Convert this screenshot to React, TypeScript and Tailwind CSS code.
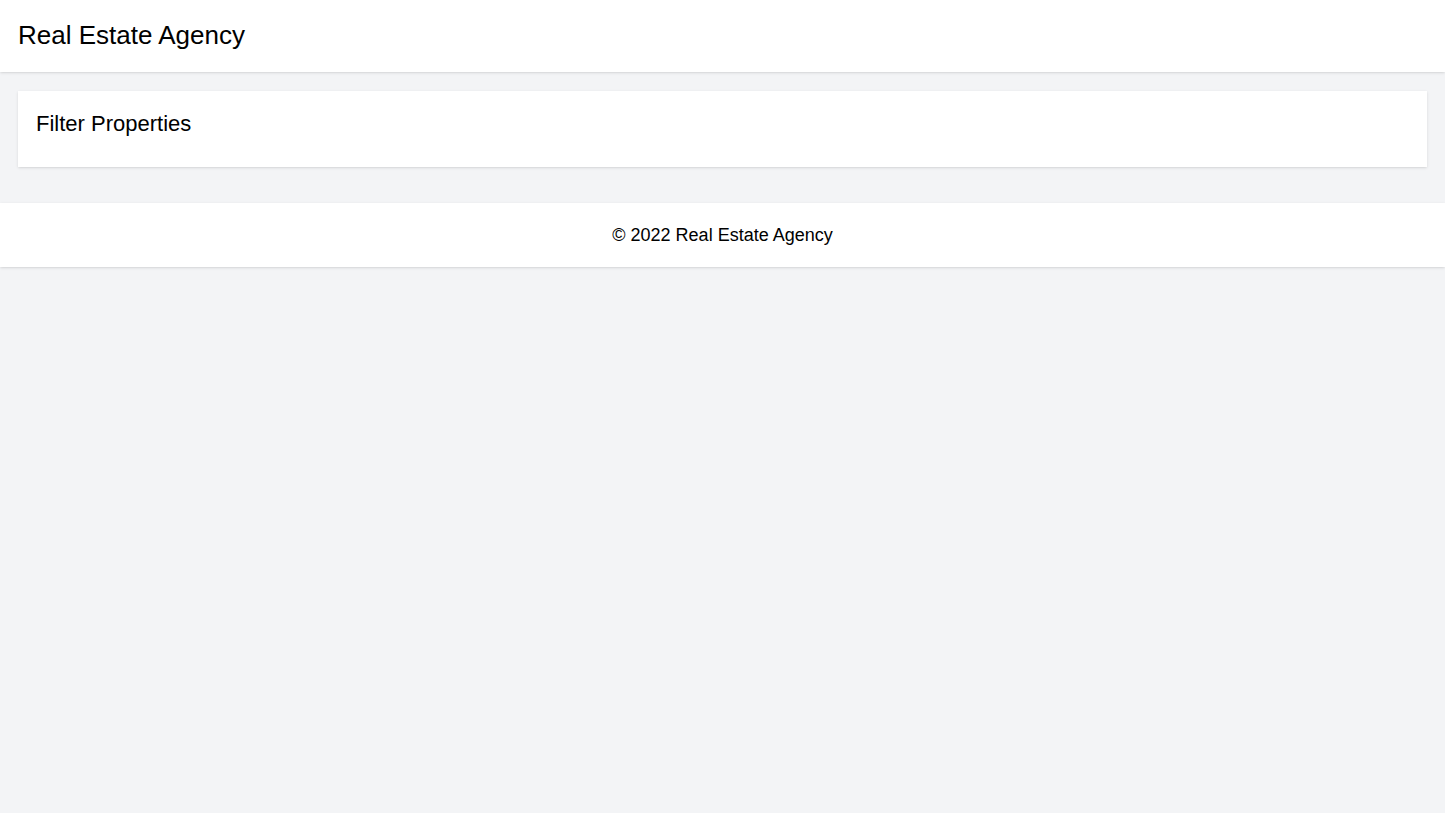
export default function App() {
  return (
    <div className="min-h-screen bg-gray-100 font-['Liberation_Sans',Arial,sans-serif] text-black">
      <header className="bg-white shadow px-[18px] pt-[19px] pb-[21px]">
        <h1 className="text-[26px] leading-[32px]">Real Estate Agency</h1>
      </header>
      <main className="px-[18px] pt-[19px] pb-[36px]">
        <section className="bg-white shadow px-[18px] pt-[20px] pb-[30px]">
          <h2 className="text-[22px] leading-[26px]">Filter Properties</h2>
        </section>
      </main>
      <footer className="bg-white shadow h-[64px] flex items-center justify-center">
        <p className="text-[18px]">© 2022 Real Estate Agency</p>
      </footer>
    </div>
  );
}
